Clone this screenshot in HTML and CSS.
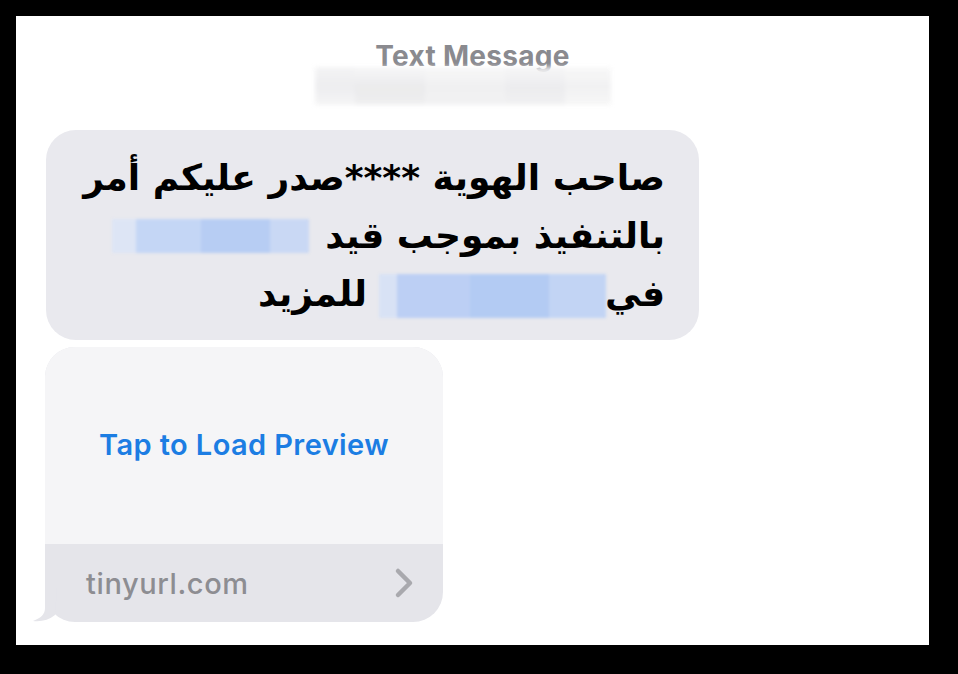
FILE: index.html
```html
<!DOCTYPE html>
<html lang="ar">
<head>
<meta charset="utf-8">
<title>Text Message</title>
<link rel="stylesheet" href="styles.css">
</head>
<body>
<div class="panel">
  <header class="head">
    <div class="title">Text Message</div>
    <div class="sender"><span class="px p1"></span><span class="px p2"></span><span class="px p3"></span><span class="px p4"></span><span class="px p5"></span></div>
  </header>
  <div class="thread">
    <div class="bubble msg" dir="rtl">
      <p class="msg-text">صاحب الهوية ****صدر عليكم أمر<br>بالتنفيذ بموجب قيد <span class="redact r1"></span><br>في <span class="redact r2"></span> للمزيد</p>
    </div>
    <div class="bubble link">
      <div class="link-preview"><span class="tap">Tap to Load Preview</span></div>
      <div class="link-foot">
        <span class="domain">tinyurl.com</span>
        <svg class="chev" width="22" height="32" viewBox="0 0 22 32"><path d="M5 4 L17 16 L5 28" fill="none" stroke="#a9a9ae" stroke-width="4.5" stroke-linecap="round" stroke-linejoin="round"/></svg>
      </div>
      <svg class="tail" width="24" height="34" viewBox="0 0 24 34"><path d="M12 0 L12 20 C12 26 8 30 0 33 C8 34 16 32 22 27 L24 0 Z" fill="#e5e5ea"/></svg>
    </div>
  </div>
</div>
</body>
</html>
```
FILE: styles.css
```css
html, body { margin: 0; padding: 0; }
body {
  background: #000;
  width: 958px;
  height: 674px;
  padding: 16px;
  box-sizing: border-box;
}
.panel {
  width: 913px;
  height: 629px;
  background: #fff;
  box-sizing: border-box;
  padding: 25px 0 0 0;
}
.head {
  display: flex;
  flex-direction: column;
  align-items: center;
}
.title {
  font-family: "Inter", "Liberation Sans", sans-serif;
  font-weight: 700;
  font-size: 28px;
  line-height: 30px;
  letter-spacing: 0.3px;
  color: #8a8a8f;
}
.sender {
  display: flex;
  width: 296px;
  height: 38px;
  margin-top: -4px;
  margin-right: 20px;
  filter: blur(2px);
  opacity: 0.9;
}
.px { display: block; height: 100%; }
.p1 { width: 40px; background: linear-gradient(#f3f3f4, #ececee 50%, #f4f4f5); }
.p2 { width: 70px; background: linear-gradient(#f6f6f7, #e9e9eb 55%, #eeeeef); }
.p3 { width: 80px; background: linear-gradient(#f7f7f8, #efeff0 50%, #f1f1f2); }
.p4 { width: 60px; background: linear-gradient(#f5f5f6, #ebebed 55%, #f0f0f1); }
.p5 { width: 46px; background: linear-gradient(#f8f8f8, #f0f0f1 50%, #f6f6f6); }

.thread {
  display: flex;
  flex-direction: column;
  align-items: flex-start;
  gap: 7px;
  margin-top: 25px;
  padding-left: 30px;
}
.bubble { border-radius: 30px; position: relative; }
.msg {
  width: 653px;
  height: 210px;
  box-sizing: border-box;
  background: #e9e9ee;
  padding: 19px 34px 0 20px;
}
.msg-text {
  margin: 0;
  font-family: "DejaVu Sans", "Noto Sans", sans-serif;
  font-weight: 700;
  font-size: 36px;
  line-height: 58px;
  color: #000;
  text-align: right;
}
.redact {
  display: inline-block;
  vertical-align: middle;
  filter: blur(1.5px);
}
.r1 {
  width: 197px;
  height: 34px;
  background:
    linear-gradient(90deg, #dde5f5 0 12%, #c4d6f5 12% 45%, #b7cdf3 45% 80%, #c9d8f4 80%);
  position: relative;
  top: -2px;
  margin-right: 4px;
}
.r2 {
  width: 227px;
  height: 44px;
  margin-right: -14px;
  background:
    linear-gradient(90deg, #d8e2f5 0 8%, #bccff4 8% 40%, #b3cbf3 40% 75%, #c2d4f4 75%);
}
.link {
  margin-left: -1px;
  width: 398px;
  height: 275px;
  background: #e5e5ea;
  display: flex;
  flex-direction: column;
}
.link-preview {
  height: 197px;
  background: #f5f5f7;
  border-radius: 30px 30px 0 0;
  display: flex;
  align-items: center;
  justify-content: center;
  padding-bottom: 2px;
  box-sizing: border-box;
}
.tap {
  font-family: "Inter", "Liberation Sans", sans-serif;
  font-weight: 600;
  font-size: 29px;
  letter-spacing: 0.4px;
  color: #1c7de3;
}
.link-foot {
  flex: 1;
  display: flex;
  align-items: center;
  justify-content: space-between;
  padding: 0 28px 0 41px;
}
.domain {
  font-family: "Inter", "Liberation Sans", sans-serif;
  font-weight: 500;
  font-size: 29px;
  letter-spacing: 0.6px;
  color: #8d8d92;
}
.tail {
  position: absolute;
  left: -12px;
  bottom: 0;
}
```
